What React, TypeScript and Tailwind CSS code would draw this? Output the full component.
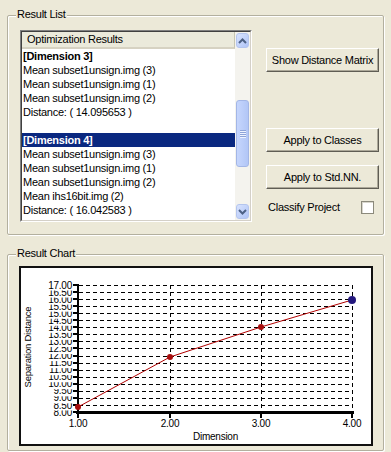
import React from "react";

const rowsA = [
  { text: "[Dimension 3]", bold: true },
  { text: "Mean subset1unsign.img (3)" },
  { text: "Mean subset1unsign.img (1)" },
  { text: "Mean subset1unsign.img (2)" },
  { text: "Distance: ( 14.095653 )" },
  { text: "" },
  { text: "[Dimension 4]", bold: true, selected: true },
  { text: "Mean subset1unsign.img (3)" },
  { text: "Mean subset1unsign.img (1)" },
  { text: "Mean subset1unsign.img (2)" },
  { text: "Mean ihs16bit.img (2)" },
  { text: "Distance: ( 16.042583 )" },
];

const points = [
  [78, 407],
  [170, 357],
  [261, 327],
  [352, 300],
];

const Chevron = ({ up }: { up?: boolean }) => (
  <svg width="9" height="6" viewBox="0 0 9 6">
    <path
      d={up ? "M1 5 L4.5 1.5 L8 5" : "M1 1 L4.5 4.5 L8 1"}
      fill="none"
      stroke="#4d6185"
      strokeWidth="2"
    />
  </svg>
);

const ScrollBtn = ({ up }: { up?: boolean }) => (
  <div className="h-[15px] mx-[1px] rounded-[3px] border border-[#b4c5ee] bg-gradient-to-br from-[#d8e3fe] to-[#b0c4f6] flex items-center justify-center">
    <Chevron up={up} />
  </div>
);

const Button = ({ label, className }: { label: string; className?: string }) => (
  <div
    className={`h-[24px] w-[113px] flex items-center justify-center whitespace-nowrap bg-[#ece9d8] border border-t-white border-l-white border-r-[#5f5d54] border-b-[#5f5d54] shadow-[inset_-1px_-1px_0_#aca899] text-black ${className ?? ""}`}
  >
    {label}
  </div>
);

const Chart = () => {
  const ticks = Array.from({ length: 19 }, (_, i) => ({
    v: (8 + i * 0.5).toFixed(2),
    y: 412 - i * 7.056,
  }));
  const xs = [
    { x: 78, l: "1.00" },
    { x: 170, l: "2.00" },
    { x: 261, l: "3.00" },
    { x: 352, l: "4.00" },
  ];
  return (
    <svg
      width="350"
      height="176"
      viewBox="21 268 350 176"
      fontFamily="'Liberation Sans', Arial, sans-serif"
    >
      <rect x="21" y="268" width="350" height="176" fill="#fff" />
      {/* grid */}
      {ticks.slice(1).map((t) => (
        <line
          key={"h" + t.v}
          x1="79"
          x2="352"
          y1={Math.round(t.y) + 0.5}
          y2={Math.round(t.y) + 0.5}
          stroke="#000"
          strokeDasharray="4 3"
          shapeRendering="crispEdges"
        />
      ))}
      {xs.slice(1).map((t) => (
        <line
          key={"v" + t.l}
          x1={t.x + 0.5}
          x2={t.x + 0.5}
          y1="285"
          y2="411"
          stroke="#000"
          strokeDasharray="4 3"
          shapeRendering="crispEdges"
        />
      ))}
      {/* y labels, drawn bottom to top so each one hides the top of the one below */}
      {ticks.map((t) => (
        <g key={"l" + t.v}>
          <rect x="46" y={t.y - 6} width="27" height="11.5" fill="#fff" />
          <text x="72" y={t.y + 3.6} fontSize="10" textAnchor="end" fill="#000">
            {t.v}
          </text>
          <line
            x1="73"
            x2="77"
            y1={Math.round(t.y)}
            y2={Math.round(t.y)}
            stroke="#000"
            strokeWidth="2"
            shapeRendering="crispEdges"
          />
        </g>
      ))}
      {/* axes */}
      <line x1="78" x2="78" y1="284" y2="413" stroke="#000" strokeWidth="2" shapeRendering="crispEdges" />
      <line x1="76" x2="354" y1="412.5" y2="412.5" stroke="#000" strokeWidth="3" shapeRendering="crispEdges" />
      {xs.map((t) => (
        <g key={"x" + t.l}>
          <line x1={t.x} x2={t.x} y1="412" y2="418" stroke="#000" strokeWidth="2" shapeRendering="crispEdges" />
          <text x={t.x} y="427" fontSize="10" textAnchor="middle" fill="#000">
            {t.l}
          </text>
        </g>
      ))}
      <text x="193" y="440" fontSize="10" fill="#000">
        Dimension
      </text>
      <text
        transform="translate(31 347) rotate(-90)"
        fontSize="9.5"
        textAnchor="middle"
        fill="#000"
      >
        Separation Distance
      </text>
      {/* data */}
      <polyline
        points={points.map((p) => p.join(",")).join(" ")}
        fill="none"
        stroke="#b00000"
        strokeWidth="1"
      />
      {points.slice(0, 3).map((p) => (
        <circle key={p[0]} cx={p[0]} cy={p[1]} r="3" fill="#a80c0c" />
      ))}
      <circle cx="352" cy="300" r="4" fill="#24187e" />
    </svg>
  );
};

export default function App() {
  return (
    <div className="w-[391px] h-[452px] bg-[#ece9d8] overflow-hidden flex flex-col pt-[15px] pl-[7px] font-['Liberation_Sans',Arial,sans-serif] text-[11px] tracking-[-0.25px] leading-[13px] text-black">
      {/* Result List group */}
      <div className="relative w-[377px] h-[220px] border border-[#b3b09f] rounded-[2px] shadow-[inset_1px_1px_0_#fff,1px_1px_0_#fff] flex">
        <span className="absolute left-[8px] -top-[8px] px-[1px] bg-[#ece9d8]">Result List</span>

        {/* list box */}
        <div className="mt-[14px] ml-[12px] w-[232px] h-[192px] border border-t-[#808080] border-l-[#808080] border-r-white border-b-white">
          <div className="w-full h-full border border-t-[#404040] border-l-[#404040] border-r-[#d4d0c8] border-b-[#d4d0c8] bg-white flex">
            <div className="w-[213px] flex flex-col">
              <div className="h-[17px] shrink-0 bg-[#ebeadb] border-b-2 border-[#d6d2c2] border-r border-r-[#c7c5b2] pl-[5px] flex items-center">
                Optimization Results
              </div>
              {rowsA.map((r, i) => (
                <div
                  key={i}
                  className={`h-[14px] shrink-0 pl-[1px] whitespace-nowrap flex items-center ${
                    r.bold ? "font-bold" : ""
                  } ${r.selected ? "bg-[#0a2880] text-white" : ""}`}
                >
                  {r.text}
                </div>
              ))}
            </div>
            {/* scrollbar */}
            <div className="w-[15px] bg-[#f4f3ee] flex flex-col">
              <div className="mt-[1px]">
                <ScrollBtn up />
              </div>
              <div className="h-[52px]" />
              <div className="h-[67px] mx-[1px] rounded-[3px] border border-[#a3b6e6] bg-gradient-to-r from-[#c6d6fd] to-[#b2c6f6] flex flex-col items-center justify-center gap-[1px]">
                {[0, 1, 2, 3].map((k) => (
                  <div key={k} className="w-[6px] h-[1px] bg-[#8ea3d8] shadow-[0_1px_0_#eef3ff]" />
                ))}
              </div>
              <div className="flex-1" />
              <div className="mb-[1px]">
                <ScrollBtn />
              </div>
            </div>
          </div>
        </div>

        {/* buttons */}
        <div className="ml-[14px] mt-[14px] flex flex-col">
          <Button label="Show Distance Matrix" className="mt-[18px]" />
          <Button label="Apply to Classes" className="mt-[56px]" />
          <Button label="Apply to Std.NN." className="mt-[13px]" />
          <div className="mt-[12px] w-[113px] h-[13px] flex items-center justify-between pl-[2px] pr-[5px]">
            <span>Classify Project</span>
            <div className="w-[13px] h-[13px] bg-white border border-[#8c8a7c] shadow-[inset_1px_1px_0_#d8d6cc]" />
          </div>
        </div>
      </div>

      {/* Result Chart group */}
      <div className="relative mt-[19px] w-[377px] h-[197px] border border-[#b3b09f] rounded-[2px] shadow-[inset_1px_1px_0_#fff,1px_1px_0_#fff]">
        <span className="absolute left-[8px] -top-[8px] px-[1px] bg-[#ece9d8]">Result Chart</span>
        <div className="mt-[11px] ml-[11px] w-[354px] h-[180px] border-2 border-[#111]">
          <Chart />
        </div>
      </div>
    </div>
  );
}
